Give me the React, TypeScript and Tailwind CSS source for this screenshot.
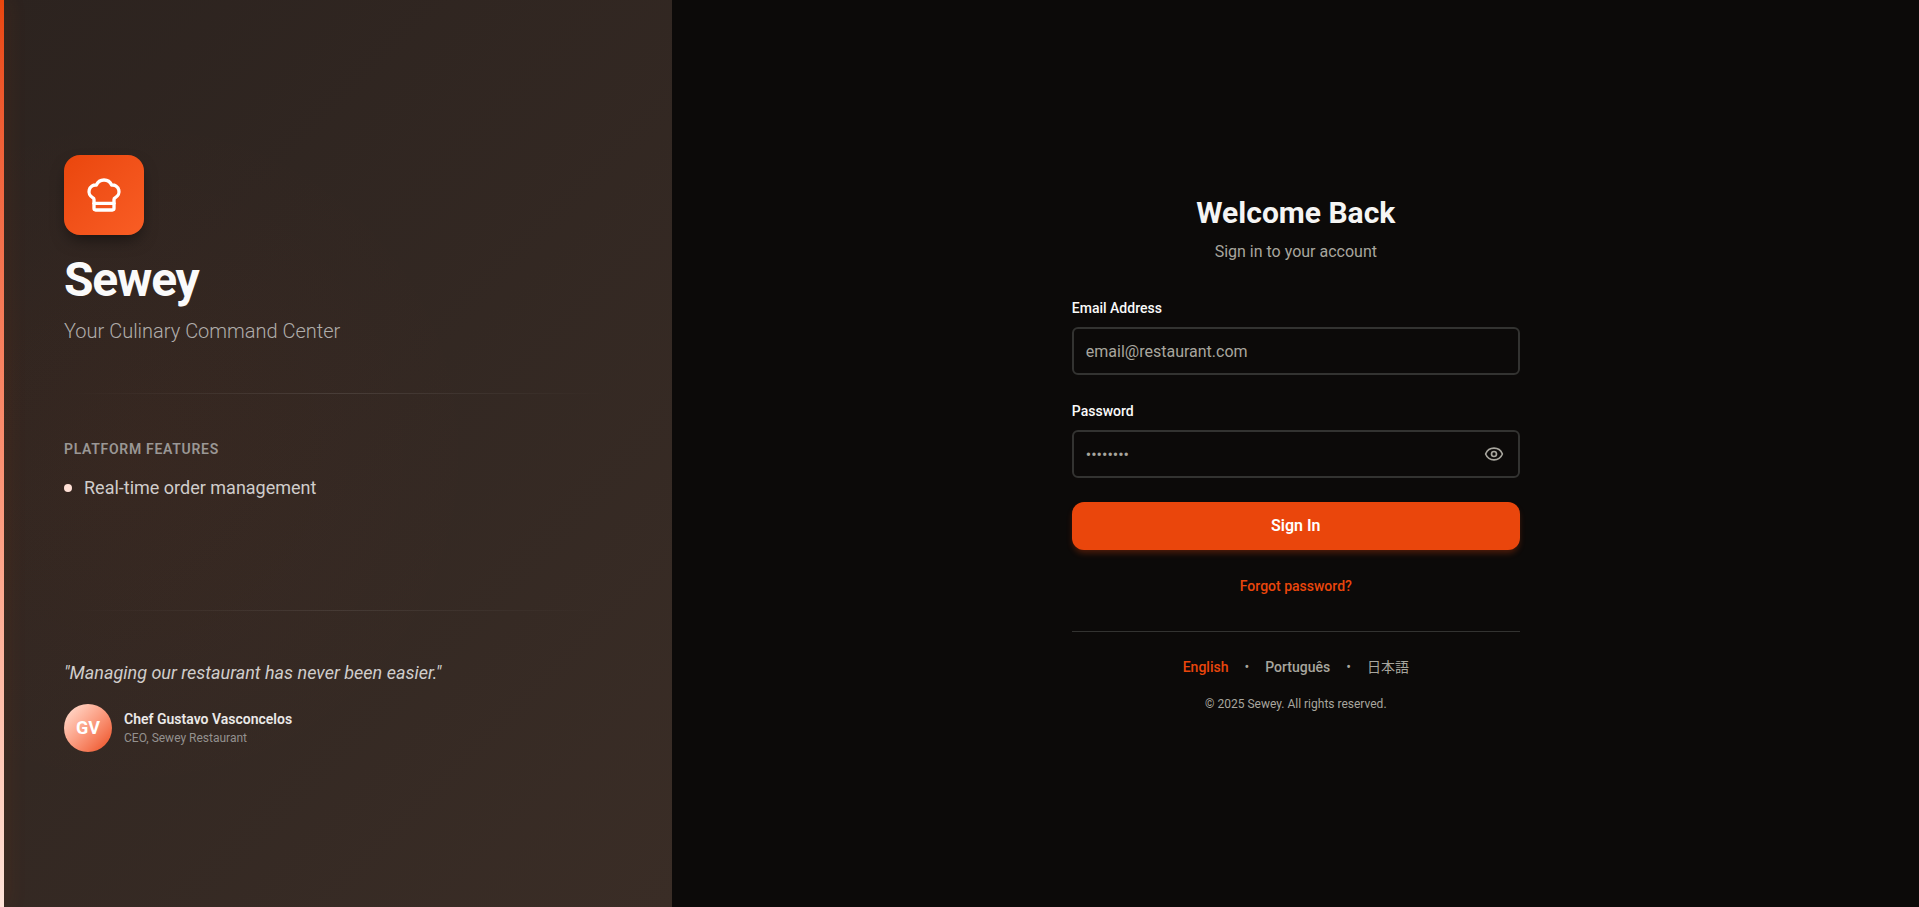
import React, { useState } from 'react';
import { ChefHat, Eye, EyeOff } from 'lucide-react';

const features = ['Real-time order management'];

const languages = [
  { code: 'en', label: 'English', weight: 'font-medium' },
  { code: 'pt', label: 'Português', weight: 'font-medium' },
  { code: 'ja', label: '日本語', weight: 'font-normal' },
];

const Divider: React.FC<{ className?: string }> = ({ className }) => (
  <div className={`h-px bg-linear-to-r from-transparent to-transparent ${className}`} />
);

const BrandPanel: React.FC = () => (
  <aside className="relative flex w-[35%] flex-col justify-center px-16 bg-linear-135 from-[#2c231f] to-[#3a2d26]">
    {/* warm glow behind the content */}
    <div className="absolute inset-0 bg-[radial-gradient(circle_at_20%_50%,rgba(234,70,12,0.03),transparent_50%)]" />
    {/* accent strip along the window edge */}
    <div className="absolute inset-y-0 left-0 w-1 bg-linear-to-b from-[#ea460c] via-[#fb8f70] to-[#ffe4d9] shadow-[0_0_20px_rgba(234,88,12,0.3)]" />

    <div className="relative">
      <div className="flex size-20 items-center justify-center rounded-2xl bg-linear-135 from-[#ea460c] to-[#f95d24] text-white shadow-[0_8px_16px_-4px_rgba(0,0,0,0.5)]">
        <ChefHat size={40} />
      </div>
      <h1 className="mt-4 text-5xl leading-[58px] font-bold tracking-tight text-[#fafafa]">Sewey</h1>
      <p className="mt-2 text-xl leading-7 font-light text-[#b0adab]">Your Culinary Command Center</p>

      <Divider className="my-12 via-white/10" />

      <section className="min-h-[120px]">
        <h2 className="text-sm leading-[14px] font-semibold tracking-wider text-[#9a9795] uppercase">Platform Features</h2>
        <ul className="mt-4">
          {features.map((feature) => (
            <li key={feature} className="flex items-center gap-3 text-lg leading-8 text-[#d0cdcb]">
              <span className="size-2 rounded-full bg-[#ffe0d6]" />
              {feature}
            </li>
          ))}
        </ul>
      </section>

      <Divider className="my-12 via-white/8" />

      <blockquote className="text-lg leading-[27px] text-[#d0cdcb] italic">"Managing our restaurant has never been easier."</blockquote>
      <div className="mt-[18px] flex items-center gap-3">
        <div className="flex size-12 items-center justify-center rounded-full bg-linear-135 from-[#ffe4d9] to-[#ea460c] text-lg font-bold text-white">
          GV
        </div>
        <div>
          <div className="text-sm leading-5 font-semibold text-[#ebe9e8]">Chef Gustavo Vasconcelos</div>
          <div className="text-xs leading-[18px] text-[#94918f]">CEO, Sewey Restaurant</div>
        </div>
      </div>
    </div>
  </aside>
);

const LoginForm: React.FC = () => {
  const [showPassword, setShowPassword] = useState(false);

  return (
    <form onSubmit={(e) => e.preventDefault()} className="flex flex-col gap-6">
      <div>
        <label htmlFor="email" className="mb-1.5 block text-sm leading-[25px] font-medium text-[#fafaf9]">Email Address</label>
        <input
          id="email"
          type="email"
          placeholder="email@restaurant.com"
          className="block h-12 w-full rounded-md border-2 border-[#333331] bg-transparent px-3 text-base text-[#fafaf9] placeholder-[#a8a69e] outline-none focus:border-[#ea460c]"
        />
      </div>

      <div>
        <label htmlFor="password" className="mb-1.5 block text-sm leading-[25px] font-medium text-[#fafaf9]">Password</label>
        <div className="relative">
          <input
            id="password"
            type={showPassword ? 'text' : 'password'}
            placeholder="••••••••"
            className="block h-12 w-full rounded-md border-2 border-[#333331] bg-transparent pr-12 pl-3 text-base text-[#fafaf9] placeholder-[#a8a69e] outline-none focus:border-[#ea460c]"
          />
          <button
            type="button"
            aria-label="Toggle password visibility"
            onClick={() => setShowPassword(!showPassword)}
            className="absolute inset-y-0 right-4 flex items-center text-[#a8a69e]"
          >
            {showPassword ? <EyeOff size={20} /> : <Eye size={20} />}
          </button>
        </div>
      </div>

      <button type="submit" className="h-12 rounded-xl bg-[#ea460c] text-base font-semibold text-white shadow-[0_4px_6px_-1px_rgba(234,70,12,0.3)]">
        Sign In
      </button>

      <a href="#forgot" className="self-center text-sm leading-[25px] font-medium text-[#ea460c]">Forgot password?</a>
    </form>
  );
};

export default function App() {
  const [language, setLanguage] = useState('en');

  return (
    <div className="flex min-h-screen bg-[#0c0a09] font-[Roboto,'Noto_Sans_CJK_JP',sans-serif]">
      <BrandPanel />

      <main className="flex flex-1 items-center justify-center pl-px">
        <div className="w-full max-w-md">
          <header className="mb-8 text-center">
            <h2 className="text-3xl leading-10 font-bold text-[#f5f5f4]">Welcome Back</h2>
            <p className="mt-1.5 text-base leading-[25px] text-[#a8a69e]">Sign in to your account</p>
          </header>

          <LoginForm />

          <footer className="mt-8 border-t border-[#333331] pt-6 text-center text-[#a8a69e]">
            <nav className="flex justify-center gap-4 text-sm leading-[23px]">
              {languages.map((lang, i) => (
                <React.Fragment key={lang.code}>
                  {i > 0 && <span>•</span>}
                  <button
                    type="button"
                    onClick={() => setLanguage(lang.code)}
                    className={`${lang.weight} ${language === lang.code ? 'text-[#ea460c]' : ''}`}
                  >
                    {lang.label}
                  </button>
                </React.Fragment>
              ))}
            </nav>
            <p className="mt-4 text-xs leading-[19px]">© 2025 Sewey. All rights reserved.</p>
          </footer>
        </div>
      </main>
    </div>
  );
}
